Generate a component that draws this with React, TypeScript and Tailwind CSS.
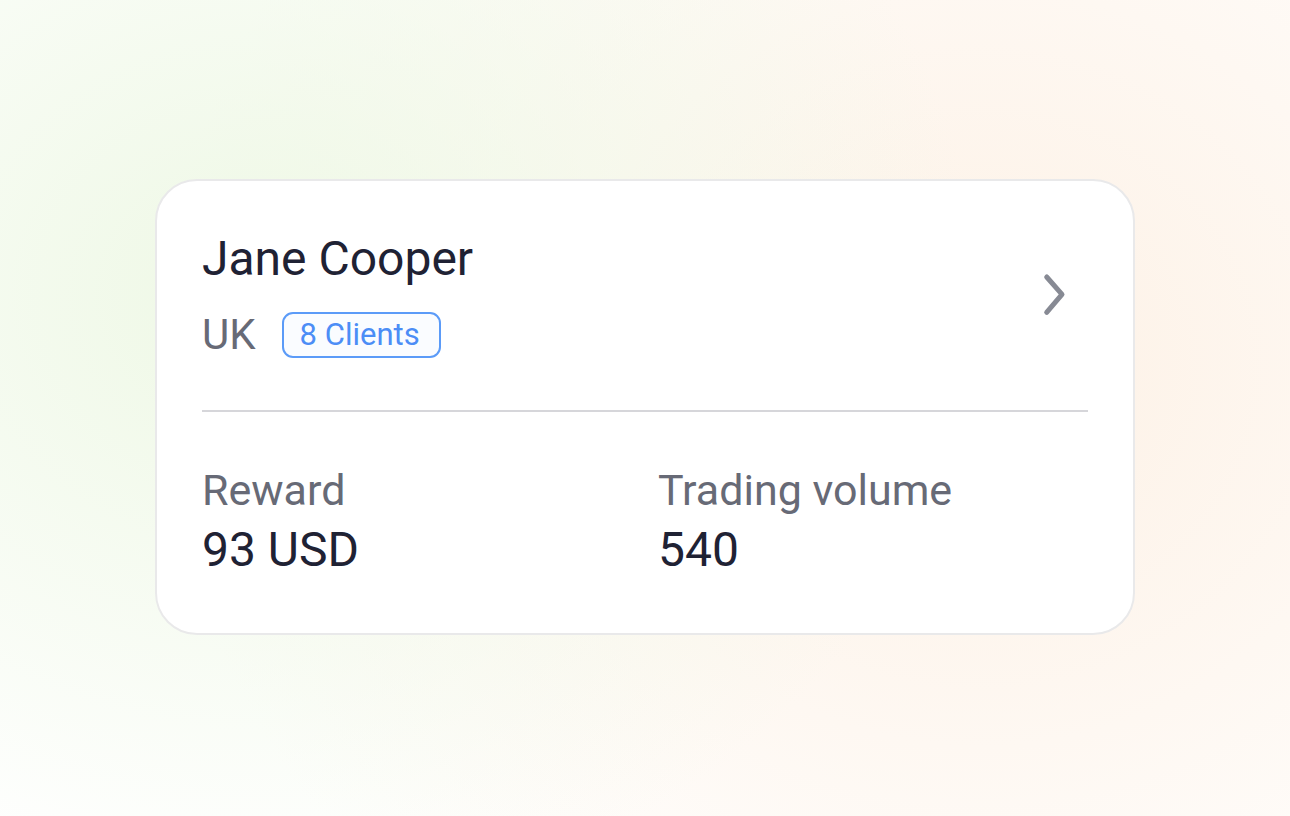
export default function App() {
  return (
    <div className="relative h-[816px] w-full overflow-hidden bg-white bg-[radial-gradient(ellipse_720px_620px_at_20%_36%,#eef8e5_0%,rgba(255,255,255,0)_100%),radial-gradient(ellipse_820px_760px_at_76%_45%,#fdf1e5_0%,rgba(255,255,255,0)_100%)] pt-[179px] font-['Roboto',sans-serif]">
      {/* Card */}
      <div className="mx-auto w-[980px] rounded-[42px] border-2 border-[#e9e9ea] bg-white px-[45px] pb-[55px] pt-[50px]">
        {/* Header */}
        <div className="flex items-center justify-between">
          <div className="flex flex-col">
            <div className="text-[48px] leading-[56px] text-[#1f2234]">Jane Cooper</div>
            <div className="mt-[25px] flex h-[46px] items-center gap-[26px]">
              <span className="text-[42px] leading-[46px] text-[#676a76]">UK</span>
              <span className="flex h-[46px] items-center rounded-[11px] border-2 border-[#5b9bf8] bg-[#fafcff] pl-[16px] pr-[19px] text-[31px] leading-[42px] text-[#4c8df6]">
                8 Clients
              </span>
            </div>
          </div>
          <svg width="24" height="45" viewBox="0 0 24 45" className="mr-[22px]" fill="none">
            <path
              d="M4.7 5 L20 22.3 L4.7 40.3"
              stroke="#878a94"
              strokeWidth="5"
              strokeLinecap="round"
              strokeLinejoin="round"
            />
          </svg>
        </div>

        <div className="mt-[52px] h-[2px] bg-[#d6d6da]" />

        {/* Stats */}
        <div className="mt-[53px] grid grid-cols-[456px_1fr]">
          <div className="flex flex-col">
            <span className="text-[43px] leading-[50px] text-[#676a76]">Reward</span>
            <span className="mt-[7px] text-[48px] leading-[56px] text-[#1f2234]">93 USD</span>
          </div>
          <div className="flex flex-col">
            <span className="text-[43px] leading-[50px] text-[#676a76]">Trading volume</span>
            <span className="mt-[7px] text-[48px] leading-[56px] text-[#1f2234]">540</span>
          </div>
        </div>
      </div>
    </div>
  );
}
